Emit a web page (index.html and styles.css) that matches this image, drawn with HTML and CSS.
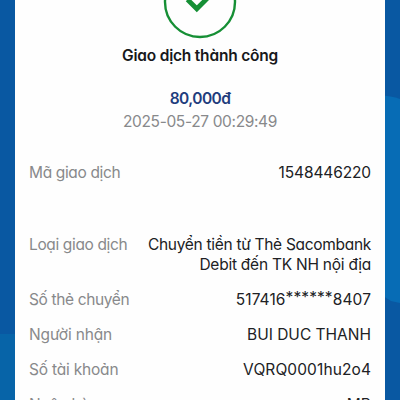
FILE: index.html
```
<!DOCTYPE html>
<html lang="vi">
<head>
<meta charset="utf-8">
<title>Giao dịch thành công</title>
<link rel="stylesheet" href="styles.css">
</head>
<body>
<svg class="backdrop" viewBox="0 0 400 400" aria-hidden="true">
  <path d="M0 0H400V400H0Z" fill="#0958a2"/>
  <path d="M0 334H20V400H0Z" fill="#0764a8"/>
  <path d="M380 95.5Q391 95.5 400 99V303L391 301L380 294Z" fill="#076cb5"/>
</svg>
<main class="receipt">
  <svg class="status-icon" viewBox="0 0 76 76" aria-hidden="true">
    <circle cx="38" cy="38" r="35" fill="none" stroke="#168f35" stroke-width="2.4"/>
    <path d="M25.5 35.5L34.8 44.8L53 26.6" fill="none" stroke="#168f35" stroke-width="4.8"/>
  </svg>
  <h1 class="title">Giao dịch thành công</h1>
  <p class="amount">80,000đ</p>
  <p class="time">2025-05-27 00:29:49</p>
  <dl class="details">
    <div class="row row-code"><dt>Mã giao dịch</dt><dd class="code">1548446220</dd></div>
    <div class="row row-type"><dt>Loại giao dịch</dt><dd class="type">Chuyển tiền từ Thẻ Sacombank<br><span class="type-end">Debit đến TK NH nội địa</span></dd></div>
    <div class="row"><dt>Số thẻ chuyển</dt><dd class="card-number">517416<span class="mask">******</span>8407</dd></div>
    <div class="row row-name"><dt>Người nhận</dt><dd>BUI DUC THANH</dd></div>
    <div class="row row-account"><dt>Số tài khoản</dt><dd>VQRQ0001hu2o4</dd></div>
    <div class="row"><dt>Ngân hàng</dt><dd>MB</dd></div>
  </dl>
</main>
</body>
</html>
```
FILE: styles.css
```
* { box-sizing: border-box; margin: 0; padding: 0; }
html, body { width: 400px; height: 400px; overflow: hidden; }
body {
  position: relative;
  font-family: Inter, "Noto Sans", sans-serif;
  font-feature-settings: "cv11";
  font-size: 15.5px;
  line-height: 20px;
  color: #202124;
}
.backdrop { position: absolute; inset: 0; width: 400px; height: 400px; }
.receipt {
  position: relative;
  display: flex;
  flex-direction: column;
  align-items: center;
  width: 370px;
  height: 400px;
  overflow: hidden;
  margin-left: 15px;
  background: #fefefe;
}
.status-icon { width: 76px; height: 76px; margin-top: -36px; flex: none; }
.title { margin-top: 5px; font-size: 15.5px; font-weight: 600; line-height: 22px; color: #17181b; letter-spacing: -0.2px; white-space: nowrap; }
.amount { margin-top: 22px; font-weight: 600; color: #1f3d7d; letter-spacing: -0.55px; }
.time { margin-top: 3px; color: #88898b; letter-spacing: -0.36px; }
.details { width: 100%; margin-top: 31px; padding: 0 14px; }
.row { display: flex; justify-content: space-between; margin-bottom: 15px; }
.row-code { margin-bottom: 52px; }
dt { color: #88898b; white-space: nowrap; letter-spacing: -0.36px; }
dd { text-align: right; white-space: nowrap; }
.code { letter-spacing: -0.12px; }
.type { letter-spacing: -0.3px; }
.type-end { letter-spacing: -0.24px; }
.card-number { letter-spacing: 0.1px; }
.mask { display: inline-block; line-height: 16px; transform: translateY(-2px); }
.row-name dt { letter-spacing: -0.15px; }
.row-account dt { letter-spacing: -0.2px; }
.row-account dd { letter-spacing: 0.1px; }
```
